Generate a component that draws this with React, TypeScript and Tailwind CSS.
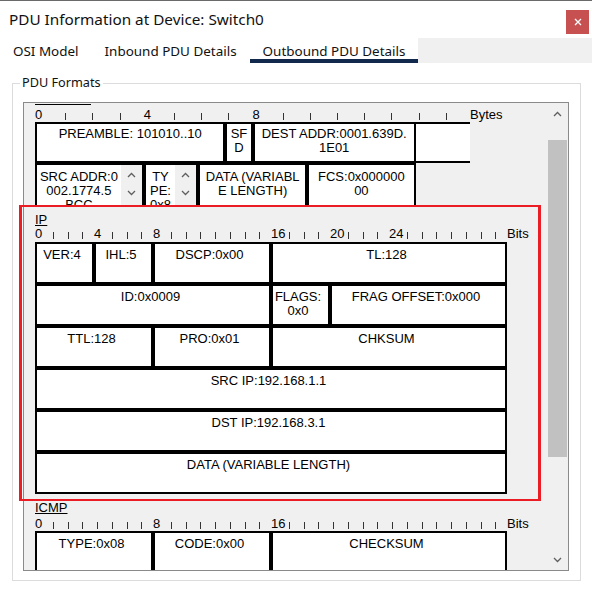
import React from "react";

const Chev = ({ down }: { down?: boolean }) => (
  <svg width="9" height="6" viewBox="0 0 9 6" className="block">
    <path
      d={down ? "M1 1 L4.5 4.5 L8 1" : "M1 5 L4.5 1.5 L8 5"}
      fill="none"
      stroke="#5f5f5f"
      strokeWidth="1.3"
    />
  </svg>
);

type RulerProps = {
  n: number;
  cellClass: string;
  labels: Record<number, string>;
  tail: string;
};

const Ruler = ({ n, cellClass, labels, tail }: RulerProps) => (
  <div className="flex h-[14px] leading-[14px]">
    {Array.from({ length: n }).map((_, i) => (
      <div key={i} className={cellClass}>
        {labels[i] !== undefined ? (
          <span className="whitespace-nowrap">{labels[i]}</span>
        ) : (
          <div className="ml-[3px] mt-[4.5px] h-[7px] w-px bg-[#333]" />
        )}
      </div>
    ))}
    <span className="whitespace-nowrap">{tail}</span>
  </div>
);

const ipCell =
  "h-full shrink-0 border-2 border-black bg-white text-center pt-[4px] pr-[5px] leading-[14px] whitespace-nowrap";
const ethCell =
  "h-full shrink-0 border-2 border-black bg-white text-center pt-[3px] leading-[14px] whitespace-nowrap";

const ScrollCell = ({
  w,
  lines,
}: {
  w: string;
  lines: string[];
}) => (
  <div className={`${w} h-full shrink-0 border-t-2 border-x-2 border-black bg-white flex overflow-hidden`}>
    <div className="flex-1 text-center pt-[5px] leading-[14px] whitespace-nowrap overflow-hidden">
      {lines.map((l, i) => (
        <div key={i}>{l}</div>
      ))}
    </div>
    <div className="w-[21px] shrink-0 bg-[#f0f0f0] flex flex-col items-center pt-[7px]">
      <Chev />
      <div className="mt-[12px]">
        <Chev down />
      </div>
    </div>
  </div>
);

export default function App() {
  return (
    <div className="relative w-[592px] h-[594px] bg-white overflow-hidden text-black">
      <div className="h-px bg-[#6a6a6a]" />
      {/* Title bar */}
      <div className="flex justify-between h-[37px]">
        <div className="ml-[9px] mt-[7.5px] text-[15.3px] leading-[21px] [font-family:'Noto_Sans',sans-serif] text-[#111]">
          PDU Information at Device: Switch0
        </div>
        <div className="mt-[9px] mr-[3px] w-[23px] h-[24px] bg-[#c75050] flex items-center justify-center">
          <svg width="8" height="8" viewBox="0 0 8 8">
            <path d="M1 1 L7 7 M7 1 L1 7" stroke="#fff" strokeWidth="1.3" />
          </svg>
        </div>
      </div>
      {/* Tabs */}
      <div className="flex h-[25px] [font-family:'Noto_Sans',sans-serif] text-[13.45px] leading-[17px] text-[#111]">
        <div className="px-[13px] pt-[5px] whitespace-nowrap">OSI Model</div>
        <div className="px-[13px] pt-[5px] whitespace-nowrap">Inbound PDU Details</div>
        <div className="px-[13px] pt-[5px] whitespace-nowrap border-b-4 border-[#10294d]">
          Outbound PDU Details
        </div>
        <div className="flex-1 bg-[#f0f0f0]" />
      </div>
      {/* Group box */}
      <div className="mt-[20px] ml-[12px] w-[569px] h-[498px] border border-[#dcdcdc]">
        <div className="-mt-[9px] ml-[7px] h-[15px] leading-[15px] text-[12.7px] [font-family:'Noto_Sans',sans-serif] text-[#111]">
          <span className="bg-white px-[2px]">PDU Formats</span>
        </div>
        <div className="mt-[12px] ml-[10px] w-[546px] h-[469px] border border-[#8a8a8a] flex">
          {/* content */}
          <div className="w-[523px] h-full shrink-0 bg-[#f0f0f0] overflow-hidden pl-[11px] [font-family:'Liberation_Sans',Arial,sans-serif] text-[13px] leading-[14px]">
            <div className="mt-px h-px w-[56px] bg-black" />
            <div className="mt-[3px]">
              <Ruler
                n={16}
                cellClass="w-[27.2px] shrink-0 h-full"
                labels={{ 0: "0", 4: "4", 8: "8" }}
                tail="Bytes"
              />
            </div>
            {/* Ethernet row 1 */}
            <div className="flex h-[41px]">
              <div className={`${ethCell} w-[190.4px]`}>PREAMBLE: 101010..10</div>
              <div className={`${ethCell} w-[27.2px]`}>
                SF
                <br />D
              </div>
              <div className={`${ethCell} w-[163.2px]`}>
                DEST ADDR:0001.639D.
                <br />
                1E01
              </div>
              <div className="h-full w-[54.4px] shrink-0 border-y-2 border-black bg-white" />
            </div>
            {/* Ethernet row 2 */}
            <div className="flex h-[42px]">
              <ScrollCell w="w-[108.8px]" lines={["SRC ADDR:0", "002.1774.5", "BCC"]} />
              <ScrollCell w="w-[54.4px]" lines={["TY", "PE:", "0x8"]} />
              <div className="w-[108.8px] h-full shrink-0 border-t-2 border-x-2 border-black bg-white text-center pt-[5px] leading-[14px] whitespace-nowrap overflow-hidden">
                DATA (VARIABL
                <br />E LENGTH)
              </div>
              <div className="w-[108.8px] h-full shrink-0 border-t-2 border-x-2 border-black bg-white text-center pt-[5px] leading-[14px] whitespace-nowrap overflow-hidden">
                FCS:0x000000
                <br />
                00
              </div>
            </div>
            {/* IP */}
            <div className="mt-[8px] h-[14px]">
              <span className="underline">IP</span>
            </div>
            <div className="h-[15px]">
              <Ruler
                n={32}
                cellClass="w-[14.75px] shrink-0 h-full"
                labels={{ 0: "0", 4: "4", 8: "8", 16: "16", 20: "20", 24: "24" }}
                tail="Bits"
              />
            </div>
            <div className="flex h-[42px]">
              <div className={`${ipCell} w-[59px]`}>VER:4</div>
              <div className={`${ipCell} w-[59px]`}>IHL:5</div>
              <div className={`${ipCell} w-[118px]`}>DSCP:0x00</div>
              <div className={`${ipCell} w-[236px]`}>TL:128</div>
            </div>
            <div className="flex h-[42px]">
              <div className={`${ipCell} w-[236px]`}>ID:0x0009</div>
              <div className={`${ipCell} w-[59px] pr-[0px]`}>
                FLAGS:
                <br />
                0x0
              </div>
              <div className={`${ipCell} w-[177px]`}>FRAG OFFSET:0x000</div>
            </div>
            <div className="flex h-[42px]">
              <div className={`${ipCell} w-[118px]`}>TTL:128</div>
              <div className={`${ipCell} w-[118px]`}>PRO:0x01</div>
              <div className={`${ipCell} w-[236px]`}>CHKSUM</div>
            </div>
            <div className="flex h-[42px]">
              <div className={`${ipCell} w-[472px]`}>SRC IP:192.168.1.1</div>
            </div>
            <div className="flex h-[42px]">
              <div className={`${ipCell} w-[472px]`}>DST IP:192.168.3.1</div>
            </div>
            <div className="flex h-[42px]">
              <div className={`${ipCell} w-[472px]`}>DATA (VARIABLE LENGTH)</div>
            </div>
            {/* ICMP */}
            <div className="mt-[7px] h-[14px]">
              <span className="underline">ICMP</span>
            </div>
            <div className="mt-[2px] h-[14px]">
              <Ruler
                n={32}
                cellClass="w-[14.75px] shrink-0 h-full"
                labels={{ 0: "0", 8: "8", 16: "16" }}
                tail="Bits"
              />
            </div>
            <div className="flex h-[42px]">
              <div className={`${ipCell} w-[118px]`}>TYPE:0x08</div>
              <div className={`${ipCell} w-[118px]`}>CODE:0x00</div>
              <div className={`${ipCell} w-[236px]`}>CHECKSUM</div>
            </div>
          </div>
          {/* scrollbar */}
          <div className="w-[21px] h-full shrink-0 bg-[#f0f0f0] flex flex-col">
            <div className="h-[21px] shrink-0 flex items-center justify-center">
              <Chev />
            </div>
            <div className="mt-[16px] ml-px w-[19px] h-[317px] shrink-0 bg-[#c1c1c1]" />
            <div className="flex-1" />
            <div className="h-[21px] shrink-0 flex items-center justify-center">
              <Chev down />
            </div>
          </div>
        </div>
      </div>
      {/* highlight overlay */}
      <div className="pointer-events-none absolute left-[19px] top-[205px] w-[522px] h-[296px] border-x-[3px] border-y-[2px] border-[#ec1c24]" />
    </div>
  );
}
